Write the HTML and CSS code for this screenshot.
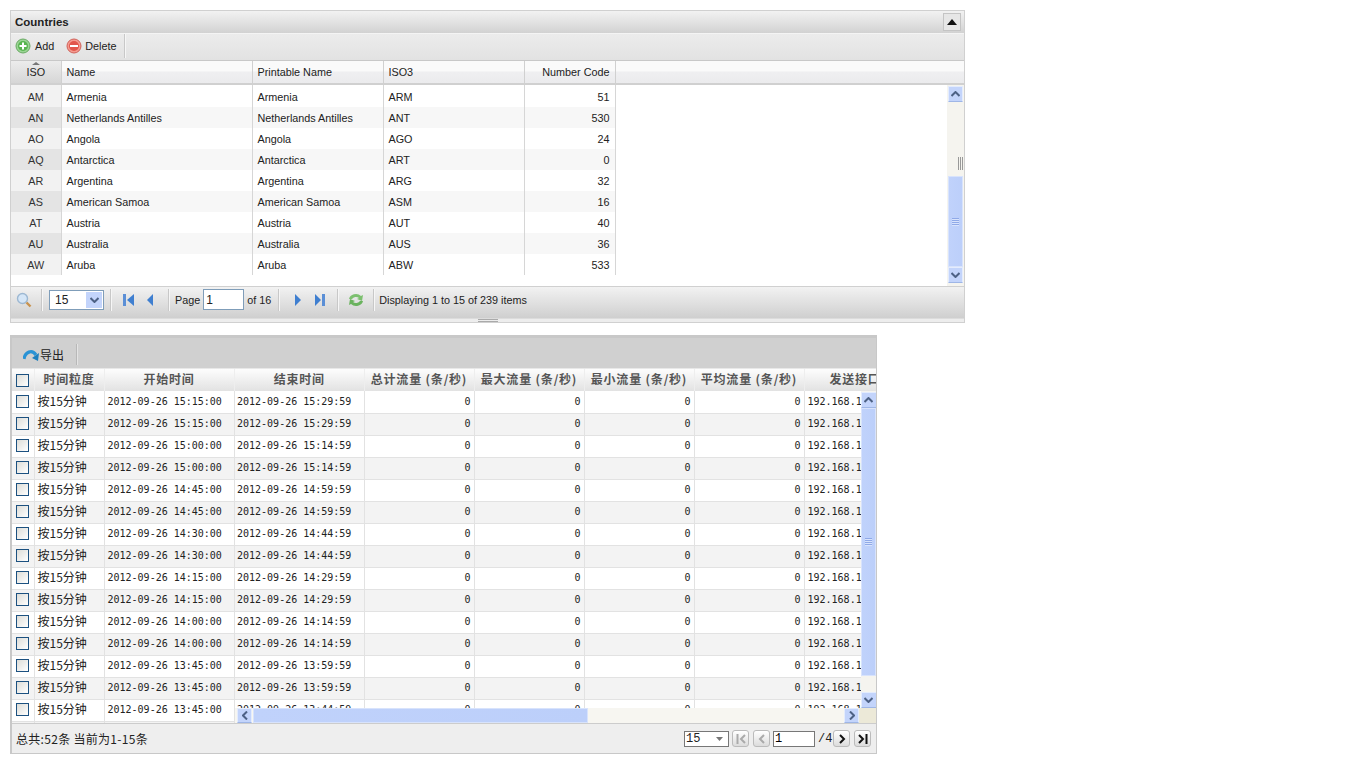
FILE: index.html
```html
<!DOCTYPE html>
<html lang="en">
<head>
    <meta charset="UTF-8">
    <title>Countries</title>
    <link rel="stylesheet" href="styles.css">
</head>

<body>
    <div class="countries">
        <div class="title-bar">
            <span class="title">Countries</span>
            <span class="collapse"><svg width="10" height="6" viewBox="0 0 10 6"><path d="M5 0L10 6H0z" fill="#111"/></svg></span>
        </div>
        <div class="tool-bar">
            <span class="tool add">
                <svg width="16" height="16" viewBox="0 0 16 16"><circle cx="8" cy="8" r="7" fill="#9ad494" stroke="#6aaa64"/><circle cx="8" cy="8" r="5" fill="#58b450"/><path d="M8 4.500v7M4.500 8h7" stroke="#fff" stroke-width="2"/></svg>
                Add
            </span>
            <span class="tool delete">
                <svg width="16" height="16" viewBox="0 0 16 16"><circle cx="8" cy="8" r="7" fill="#f49a8f" stroke="#d0625a"/><circle cx="8" cy="8" r="5" fill="#e2564b"/><path d="M4 8h8" stroke="#fff" stroke-width="2"/></svg>
                Delete
            </span>
            <span class="sep"></span>
        </div>
        <div class="grid-head-wrap">
            <table class="grid-head">
                <colgroup><col class="w-iso"><col class="w-name"><col class="w-print"><col class="w-iso3"><col class="w-num"></colgroup>
                <tr>
                    <th class="iso sorted"><span class="sort-arrow"></span>ISO</th>
                    <th>Name</th><th>Printable Name</th><th>ISO3</th><th class="num">Number Code</th>
                </tr>
            </table>
        </div>
        <div class="grid-body">
            <div class="grid-rows">
                <table class="grid-table">
                    <colgroup><col class="w-iso"><col class="w-name"><col class="w-print"><col class="w-iso3"><col class="w-num"></colgroup>
                    <tr class="first"><td class="iso">AM</td><td>Armenia</td><td>Armenia</td><td>ARM</td><td class="num">51</td></tr>
                    <tr class="alt"><td class="iso">AN</td><td>Netherlands Antilles</td><td>Netherlands Antilles</td><td>ANT</td><td class="num">530</td></tr>
                    <tr><td class="iso">AO</td><td>Angola</td><td>Angola</td><td>AGO</td><td class="num">24</td></tr>
                    <tr class="alt"><td class="iso">AQ</td><td>Antarctica</td><td>Antarctica</td><td>ART</td><td class="num">0</td></tr>
                    <tr><td class="iso">AR</td><td>Argentina</td><td>Argentina</td><td>ARG</td><td class="num">32</td></tr>
                    <tr class="alt"><td class="iso">AS</td><td>American Samoa</td><td>American Samoa</td><td>ASM</td><td class="num">16</td></tr>
                    <tr><td class="iso">AT</td><td>Austria</td><td>Austria</td><td>AUT</td><td class="num">40</td></tr>
                    <tr class="alt"><td class="iso">AU</td><td>Australia</td><td>Australia</td><td>AUS</td><td class="num">36</td></tr>
                    <tr><td class="iso">AW</td><td>Aruba</td><td>Aruba</td><td>ABW</td><td class="num">533</td></tr>
                </table>
            </div>
            <div class="vscroll vscroll-a">
                <span class="sb-btn"><svg width="9" height="6" viewBox="0 0 9 6"><path d="M.5 5L4.500 1l4 4" fill="none" stroke="#4d6185" stroke-width="2"/></svg></span>
                <span class="track-a"><i class="track-grip"></i></span>
                <span class="sb-thumb"><i class="thumb-grip"></i></span>
                <span class="sb-btn"><svg width="9" height="6" viewBox="0 0 9 6"><path d="M.5 1L4.500 5l4-4" fill="none" stroke="#4d6185" stroke-width="2"/></svg></span>
            </div>
        </div>
        <div class="pager">
            <svg class="p-search" width="16" height="16" viewBox="0 0 16 16"><circle cx="6.500" cy="6.500" r="5" fill="#d5e6f7" stroke="#9db8d2" stroke-width="1.400"/><path d="M10.500 10.500l4 4" stroke="#c8924e" stroke-width="2.400"/></svg>
            <span class="sep"></span>
            <span class="size-box">15<span class="size-btn"><svg width="9" height="6" viewBox="0 0 9 6"><path d="M.5 1L4.500 5l4-4" fill="none" stroke="#4d6185" stroke-width="2"/></svg></span></span>
            <span class="sep"></span>
            <svg class="p-first" width="13" height="14" viewBox="0 0 13 14"><path d="M0 1h3v12H0z" fill="#5b8fd6"/><path d="M11 1v12L4 7z" fill="#3f7fd0"/></svg>
            <svg class="p-prev" width="9" height="14" viewBox="0 0 9 14"><path d="M7 1v12L1 7z" fill="#3f7fd0"/></svg>
            <span class="sep"></span>
            <span class="p-label">Page</span><input class="page-input" type="text" value="1"><span class="p-of">of 16</span>
            <span class="sep"></span>
            <svg class="p-next" width="9" height="14" viewBox="0 0 9 14"><path d="M1 1v12l6-6z" fill="#3f7fd0"/></svg>
            <svg class="p-last" width="13" height="14" viewBox="0 0 13 14"><path d="M1 1v12l6-6z" fill="#3f7fd0"/><path d="M8 1h3v12H8z" fill="#5b8fd6"/></svg>
            <span class="sep"></span>
            <svg class="p-refresh" width="18" height="18" viewBox="0 0 18 18"><path d="M2 8a7 6 0 0 1 12-3l2-1-1 6-5-2 2-1a4.500 4 0 0 0-7 1z" fill="#7cc06f"/><path d="M16 10a7 6 0 0 1-12 3l-2 1 1-6 5 2-2 1a4.500 4 0 0 0 7-1z" fill="#6ab35e"/></svg>
            <span class="sep"></span>
            <span class="p-info">Displaying 1 to 15 of 239 items</span>
        </div>
        <div class="resize-bar"><span class="resize-grip"></span></div>
    </div>

    <div class="flows">
        <div class="flow-tools">
            <span class="export">
                <svg width="17" height="12" viewBox="0 0 17 12"><path d="M1 10C2 3 9 0 13 6" fill="none" stroke="#2a93d5" stroke-width="3.200"/><path d="M16 4l-1 8-6-3z" fill="#1d7fbe"/></svg>
                导出
            </span>
            <span class="sep"></span>
        </div>
        <div class="flow-grid">
            <div class="frozen">
                <table class="flow-head">
                    <colgroup><col class="w-check"><col class="w-gran"><col class="w-time"></colgroup>
                    <tr><th><span class="check"></span></th><th>时间粒度</th><th>开始时间</th></tr>
                </table>
                <table class="flow-table">
                    <colgroup><col class="w-check"><col class="w-gran"><col class="w-time"></colgroup>
                    <tr><td class="box"><span class="check"></span></td><td class="gran">按15分钟</td><td class="time">2012-09-26 15:15:00</td></tr>
                    <tr class="alt"><td class="box"><span class="check"></span></td><td class="gran">按15分钟</td><td class="time">2012-09-26 15:15:00</td></tr>
                    <tr><td class="box"><span class="check"></span></td><td class="gran">按15分钟</td><td class="time">2012-09-26 15:00:00</td></tr>
                    <tr class="alt"><td class="box"><span class="check"></span></td><td class="gran">按15分钟</td><td class="time">2012-09-26 15:00:00</td></tr>
                    <tr><td class="box"><span class="check"></span></td><td class="gran">按15分钟</td><td class="time">2012-09-26 14:45:00</td></tr>
                    <tr class="alt"><td class="box"><span class="check"></span></td><td class="gran">按15分钟</td><td class="time">2012-09-26 14:45:00</td></tr>
                    <tr><td class="box"><span class="check"></span></td><td class="gran">按15分钟</td><td class="time">2012-09-26 14:30:00</td></tr>
                    <tr class="alt"><td class="box"><span class="check"></span></td><td class="gran">按15分钟</td><td class="time">2012-09-26 14:30:00</td></tr>
                    <tr><td class="box"><span class="check"></span></td><td class="gran">按15分钟</td><td class="time">2012-09-26 14:15:00</td></tr>
                    <tr class="alt"><td class="box"><span class="check"></span></td><td class="gran">按15分钟</td><td class="time">2012-09-26 14:15:00</td></tr>
                    <tr><td class="box"><span class="check"></span></td><td class="gran">按15分钟</td><td class="time">2012-09-26 14:00:00</td></tr>
                    <tr class="alt"><td class="box"><span class="check"></span></td><td class="gran">按15分钟</td><td class="time">2012-09-26 14:00:00</td></tr>
                    <tr><td class="box"><span class="check"></span></td><td class="gran">按15分钟</td><td class="time">2012-09-26 13:45:00</td></tr>
                    <tr class="alt"><td class="box"><span class="check"></span></td><td class="gran">按15分钟</td><td class="time">2012-09-26 13:45:00</td></tr>
                    <tr><td class="box"><span class="check"></span></td><td class="gran">按15分钟</td><td class="time">2012-09-26 13:45:00</td></tr>
                    <tr class="alt"><td class="box"></td><td></td><td></td></tr>
                </table>
            </div>
            <div class="scrolling">
                <table class="flow-head">
                    <colgroup><col class="w-end"><col class="w-flow"><col class="w-flow"><col class="w-flow"><col class="w-flow"><col class="w-port"></colgroup>
                    <tr><th>结束时间</th><th>总计流量 (条/秒)</th><th>最大流量 (条/秒)</th><th>最小流量 (条/秒)</th><th>平均流量 (条/秒)</th><th>发送接口</th></tr>
                </table>
                <div class="flow-body">
                    <div class="flow-rows">
                        <table class="flow-table">
                            <colgroup><col class="w-end"><col class="w-flow"><col class="w-flow"><col class="w-flow"><col class="w-flow"><col class="w-port"></colgroup>
                            <tr><td class="time">2012-09-26 15:29:59</td><td class="val">0</td><td class="val">0</td><td class="val">0</td><td class="val">0</td><td class="time">192.168.1.1</td></tr>
                            <tr class="alt"><td class="time">2012-09-26 15:29:59</td><td class="val">0</td><td class="val">0</td><td class="val">0</td><td class="val">0</td><td class="time">192.168.1.1</td></tr>
                            <tr><td class="time">2012-09-26 15:14:59</td><td class="val">0</td><td class="val">0</td><td class="val">0</td><td class="val">0</td><td class="time">192.168.1.1</td></tr>
                            <tr class="alt"><td class="time">2012-09-26 15:14:59</td><td class="val">0</td><td class="val">0</td><td class="val">0</td><td class="val">0</td><td class="time">192.168.1.1</td></tr>
                            <tr><td class="time">2012-09-26 14:59:59</td><td class="val">0</td><td class="val">0</td><td class="val">0</td><td class="val">0</td><td class="time">192.168.1.1</td></tr>
                            <tr class="alt"><td class="time">2012-09-26 14:59:59</td><td class="val">0</td><td class="val">0</td><td class="val">0</td><td class="val">0</td><td class="time">192.168.1.1</td></tr>
                            <tr><td class="time">2012-09-26 14:44:59</td><td class="val">0</td><td class="val">0</td><td class="val">0</td><td class="val">0</td><td class="time">192.168.1.1</td></tr>
                            <tr class="alt"><td class="time">2012-09-26 14:44:59</td><td class="val">0</td><td class="val">0</td><td class="val">0</td><td class="val">0</td><td class="time">192.168.1.1</td></tr>
                            <tr><td class="time">2012-09-26 14:29:59</td><td class="val">0</td><td class="val">0</td><td class="val">0</td><td class="val">0</td><td class="time">192.168.1.1</td></tr>
                            <tr class="alt"><td class="time">2012-09-26 14:29:59</td><td class="val">0</td><td class="val">0</td><td class="val">0</td><td class="val">0</td><td class="time">192.168.1.1</td></tr>
                            <tr><td class="time">2012-09-26 14:14:59</td><td class="val">0</td><td class="val">0</td><td class="val">0</td><td class="val">0</td><td class="time">192.168.1.1</td></tr>
                            <tr class="alt"><td class="time">2012-09-26 14:14:59</td><td class="val">0</td><td class="val">0</td><td class="val">0</td><td class="val">0</td><td class="time">192.168.1.1</td></tr>
                            <tr><td class="time">2012-09-26 13:59:59</td><td class="val">0</td><td class="val">0</td><td class="val">0</td><td class="val">0</td><td class="time">192.168.1.1</td></tr>
                            <tr class="alt"><td class="time">2012-09-26 13:59:59</td><td class="val">0</td><td class="val">0</td><td class="val">0</td><td class="val">0</td><td class="time">192.168.1.1</td></tr>
                            <tr><td class="time">2012-09-26 13:44:59</td><td class="val">0</td><td class="val">0</td><td class="val">0</td><td class="val">0</td><td class="time">192.168.1.1</td></tr>
                        </table>
                    </div>
                    <div class="vscroll vscroll-b">
                        <span class="sb-btn"><svg width="9" height="6" viewBox="0 0 9 6"><path d="M.5 5L4.500 1l4 4" fill="none" stroke="#4d6185" stroke-width="2"/></svg></span>
                        <span class="sb-thumb"><i class="thumb-grip"></i></span>
                        <span class="track-b"></span>
                        <span class="sb-btn"><svg width="9" height="6" viewBox="0 0 9 6"><path d="M.5 1L4.500 5l4-4" fill="none" stroke="#4d6185" stroke-width="2"/></svg></span>
                    </div>
                </div>
                <div class="hscroll">
                    <span class="sb-btn"><svg width="6" height="9" viewBox="0 0 6 9"><path d="M5 .5L1 4.500l4 4" fill="none" stroke="#4d6185" stroke-width="2"/></svg></span>
                    <span class="sb-thumb"></span>
                    <span class="track-h"></span>
                    <span class="sb-btn"><svg width="6" height="9" viewBox="0 0 6 9"><path d="M1 .5L5 4.500l-4 4" fill="none" stroke="#4d6185" stroke-width="2"/></svg></span>
                    <span class="corner"></span>
                </div>
            </div>
        </div>
        <div class="flow-pager">
            <span class="flow-total">总共:52条 当前为1-15条</span>
            <span class="flow-size">15<svg width="7" height="4" viewBox="0 0 7 4"><path d="M0 0h7L3.500 4z" fill="#777"/></svg></span>
            <span class="nav-btn off"><svg width="10" height="10" viewBox="0 0 10 10"><path d="M1.500 0v10" stroke="#aaa" stroke-width="2"/><path d="M9 1L5 5l4 4" fill="none" stroke="#aaa" stroke-width="2"/></svg></span>
            <span class="nav-btn off"><svg width="8" height="10" viewBox="0 0 8 10"><path d="M6 1L2 5l4 4" fill="none" stroke="#aaa" stroke-width="2"/></svg></span>
            <input class="flow-page" type="text" value="1">
            <span class="flow-of">/4</span>
            <span class="nav-btn"><svg width="8" height="10" viewBox="0 0 8 10"><path d="M2 1l4 4-4 4" fill="none" stroke="#111" stroke-width="2"/></svg></span>
            <span class="nav-btn"><svg width="10" height="10" viewBox="0 0 10 10"><path d="M1 1l4 4-4 4" fill="none" stroke="#111" stroke-width="2"/><path d="M8.500 0v10" stroke="#111" stroke-width="2"/></svg></span>
        </div>
    </div>
</body>
</html>
```

FILE: styles.css
```css
* {
    box-sizing: border-box;
}
body {
    margin: 10px 0 0 10px;
    background: #fff;
    font-family: "Liberation Sans", Arial, sans-serif;
    font-size: 10.800px;
    color: #222;
}
table {
    border-collapse: collapse;
    table-layout: fixed;
}
.sep {
    width: 1px;
    height: 21px;
    background: #c8c8c8;
    box-shadow: 1px 0 0 #f6f6f6;
}

/* top grid */
.countries {
    width: 955px;
    height: 313px;
    border: 1px solid #d0d0d0;
    display: flex;
    flex-direction: column;
}
.title-bar {
    height: 23px;
    display: flex;
    align-items: center;
    justify-content: space-between;
    padding: 0 3px 0 4px;
    background: linear-gradient(#f2f2f2, #d2d2d2);
    border-bottom: 1px solid #f4f4f4;
}
.title {
    font-weight: bold;
    font-size: 11.500px;
    color: #222;
}
.collapse {
    width: 18px;
    height: 18px;
    display: flex;
    align-items: center;
    justify-content: center;
    border: 1px solid #c4c4c4;
    background: #e6e6e6;
}
.tool-bar {
    height: 27px;
    display: flex;
    align-items: center;
    padding: 0 0 2px 4px;
    background: linear-gradient(#ececec, #e2e2e2);
    border-bottom: 1px solid #c8c8c8;
}
.tool {
    display: flex;
    align-items: center;
    gap: 4px;
}
.delete {
    margin-left: 12px;
    gap: 3px;
}
.tool-bar .sep {
    margin-left: 8px;
    height: 24px;
}
.grid-head-wrap {
    height: 24px;
    flex: none;
    background: linear-gradient(#fafafa 0, #fafafa 45%, #efeff1 50%, #ebebed 100%);
    border-bottom: 2px solid #d0d0d0;
}
.grid-head {
    width: 604px;
    height: 22px;
}
.w-iso { width: 50px; }
.w-name { width: 191px; }
.w-print { width: 131px; }
.w-iso3 { width: 141px; }
.w-num { width: 91px; }
.grid-head th {
    font-weight: normal;
    text-align: left;
    padding: 0 4px 0 5px;
    border-right: 1px solid #d0d0d0;
}
.grid-head .num {
    text-align: right;
    padding-right: 5px;
}
.grid-head .sorted {
    position: relative;
    text-align: center;
    padding: 0;
    background: linear-gradient(#ececec, #d6d6d6);
}
.sort-arrow {
    position: absolute;
    left: 21px;
    top: 1px;
    border-left: 4px solid transparent;
    border-right: 4px solid transparent;
    border-bottom: 3px solid #777;
}
.grid-body {
    height: 201px;
    display: flex;
    justify-content: space-between;
    background: #fff;
}
.grid-table {
    width: 604px;
}
.grid-table td {
    height: 21px;
    padding: 0 5px;
    border-right: 1px solid #d6d6d6;
    white-space: nowrap;
    overflow: hidden;
}
.grid-table .first td {
    height: 22px;
    padding-top: 2px;
}
.grid-table .alt td {
    background: #f7f7f7;
}
.grid-table .iso {
    text-align: center;
    padding: 0;
    background: #f2f2f2;
    color: #333;
}
.grid-table .alt .iso {
    background: #e4e4e4;
}
.grid-table .num {
    text-align: right;
}

/* scrollbars */
.vscroll {
    display: flex;
    flex-direction: column;
    align-items: center;
    padding-top: 1px;
}
.sb-btn {
    flex: none;
    width: 16px;
    height: 16px;
    display: flex;
    align-items: center;
    justify-content: center;
    background: #c3d4fb;
    border: 1px solid #e4ecfd;
    border-bottom-color: #9fb6e6;
}
.sb-thumb {
    display: flex;
    align-items: center;
    justify-content: center;
    background: linear-gradient(90deg, #c0d2fb, #bccffa);
    border: 1px solid #d8e3fc;
}
.thumb-grip {
    width: 7px;
    height: 8px;
    background: repeating-linear-gradient(#8fa9e8 0 1px, #d8e3fc 1px 2px);
}
.vscroll-a {
    width: 17px;
    align-items: flex-start;
    padding-left: 1px;
    background: #f5f4ef;
}
.vscroll-a .sb-btn {
    width: 15px;
}
.vscroll-a .sb-thumb {
    width: 15px;
    height: 91px;
}
.track-a {
    height: 74px;
    width: 16px;
    display: flex;
    justify-content: flex-end;
    align-items: flex-end;
    padding: 0 1px 6px 0;
}
.track-grip {
    width: 5px;
    height: 13px;
    background: repeating-linear-gradient(90deg, #999 0 1px, #f5f4ef 1px 2px);
}
.vscroll-b {
    flex: none;
    width: 15px;
    background: #f5f4ef;
}
.vscroll-b .sb-thumb {
    width: 15px;
    height: 268px;
}
.track-b {
    flex: 1;
}

/* top pager */
.pager {
    height: 32px;
    display: flex;
    align-items: center;
    background: linear-gradient(#f2f2f2, #cfcfcf);
    border-top: 1px solid #d0d0d0;
    padding: 0 0 6px 5px;
}
.pager .sep {
    height: 22px;
    flex: none;
}
.p-search { margin-right: 9px; }
.size-box {
    width: 55px;
    height: 20px;
    margin: 0 6px 0 7px;
    display: flex;
    align-items: center;
    justify-content: space-between;
    padding: 1px 1px 1px 5px;
    background: #fff;
    border: 1px solid #7f9db9;
    font-size: 12px;
}
.size-btn {
    width: 16px;
    height: 100%;
    display: flex;
    align-items: center;
    justify-content: center;
    background: #c3d4fb;
}
.p-first { margin-left: 12px; }
.p-prev { margin: 0 13px 0 10px; }
.p-label { margin-left: 6px; }
.page-input {
    width: 41px;
    height: 21px;
    margin: 0 3px;
    padding: 0 2px;
    border: 1px solid #7f9db9;
    font: 12px "Liberation Sans", sans-serif;
    color: #222;
}
.p-of { margin-right: 7px; }
.p-next { margin: 0 11px 0 15px; }
.p-last { margin-right: 10px; }
.p-refresh { margin: 0 8px 0 9px; }
.p-info { margin-left: 5px; }
.resize-bar {
    flex: 1;
    display: flex;
    align-items: center;
    justify-content: center;
    background: #ededed;
    border-top: 1px solid #dcdcdc;
}
.resize-grip {
    width: 20px;
    height: 3px;
    border-top: 1px solid #aaa;
    border-bottom: 1px solid #aaa;
}

/* bottom grid */
.flows {
    width: 867px;
    height: 419px;
    margin-top: 12px;
    display: flex;
    flex-direction: column;
    border: 1px solid #c8c8c8;
    border-top-width: 3px;
    border-left-width: 2px;
    font-family: "Noto Sans CJK SC", sans-serif;
    font-size: 12px;
}
.flow-tools {
    height: 31px;
    display: flex;
    align-items: center;
    padding: 3px 0 0 11px;
    background: #d0d0d0;
    border-bottom: 1px solid #e8e8e8;
}
.export {
    display: flex;
    align-items: center;
    color: #222;
    line-height: 14px;
}
.flow-tools .sep {
    margin-left: 12px;
    background: #b8b8b8;
    box-shadow: 1px 0 0 #e4e4e4;
}
.flow-grid {
    height: 354px;
    display: flex;
    overflow: hidden;
}
.frozen {
    width: 223px;
    flex: none;
    overflow: hidden;
    background: #fff;
}
.frozen table {
    width: 222px;
}
.scrolling {
    flex: 1;
    min-width: 0;
    overflow: hidden;
}
.scrolling table {
    width: 671px;
}
.w-check { width: 22px; }
.w-gran { width: 70px; }
.w-time { width: 130px; }
.w-end { width: 129px; }
.w-flow { width: 110px; }
.w-port { width: 102px; }
.flow-head {
    height: 22px;
    background: linear-gradient(#fdfdfd, #e2e2e2);
}
.flow-head th {
    padding: 0 0 2px;
    border-right: 1px solid #eee;
    font-weight: bold;
    font-size: 12px;
    letter-spacing: .8px;
    line-height: 14px;
    color: #555;
    white-space: nowrap;
    overflow: hidden;
}
.flow-table td {
    height: 22px;
    padding: 0 3px 2px;
    border-right: 1px solid #e2e2e2;
    border-bottom: 1px solid #e2e2e2;
    white-space: nowrap;
    overflow: hidden;
    line-height: 14px;
}
.flow-table .alt td {
    background: #f3f3f3;
}
.flow-table .box {
    padding: 0 0 3px;
    text-align: center;
}
.flow-table .time,
.flow-table .val {
    padding-bottom: 0;
    font-family: "DejaVu Sans Mono", monospace;
    font-size: 10px;
}
.scrolling .flow-table td:first-child {
    padding-left: 2px;
}
.flow-table .val {
    text-align: right;
}
.check {
    display: inline-block;
    width: 13px;
    height: 13px;
    vertical-align: middle;
    border: 1px solid #1c5180;
    background: linear-gradient(135deg, #dcdcd7, #fff);
}
.flow-body {
    display: flex;
    height: 317px;
}
.flow-rows {
    flex: 1;
    min-width: 0;
    overflow: hidden;
    background: #fff;
}
.hscroll {
    height: 15px;
    display: flex;
    padding-left: 2px;
    background: #f7f6f1;
}
.hscroll .sb-btn {
    width: 15px;
    height: 15px;
}
.hscroll .sb-thumb {
    width: 335px;
    margin-left: 1px;
}
.track-h {
    flex: 1;
}
.corner {
    width: 17px;
    flex: none;
    background: #ece9d8;
}
.flow-pager {
    flex: 1;
    display: flex;
    align-items: center;
    padding: 0 5px 0 4px;
    background: #eee;
    border-top: 1px solid #ccc;
    font-size: 12px;
    color: #222;
}
.flow-total {
    margin-right: auto;
    letter-spacing: .3px;
}
.flow-size {
    width: 45px;
    height: 16px;
    display: flex;
    align-items: center;
    justify-content: space-between;
    padding: 0 5px 0 1px;
    background: #fff;
    border: 1px solid #777;
    margin-right: 3px;
    font-family: "Liberation Mono", monospace;
}
.nav-btn {
    width: 17px;
    height: 17px;
    margin-right: 4px;
    display: flex;
    align-items: center;
    justify-content: center;
    border: 1px solid #bbb;
    border-radius: 3px;
    background: linear-gradient(#fff, #dcdcdc);
}
.nav-btn:last-child {
    margin-right: 0;
}
.flow-page {
    width: 42px;
    height: 16px;
    margin-left: -1px;
    padding: 0 1px;
    border: 1px solid #777;
    font: 12px "Liberation Mono", monospace;
}
.flow-of {
    width: 18px;
    padding-left: 3px;
    font-family: "Liberation Mono", monospace;
}
```
